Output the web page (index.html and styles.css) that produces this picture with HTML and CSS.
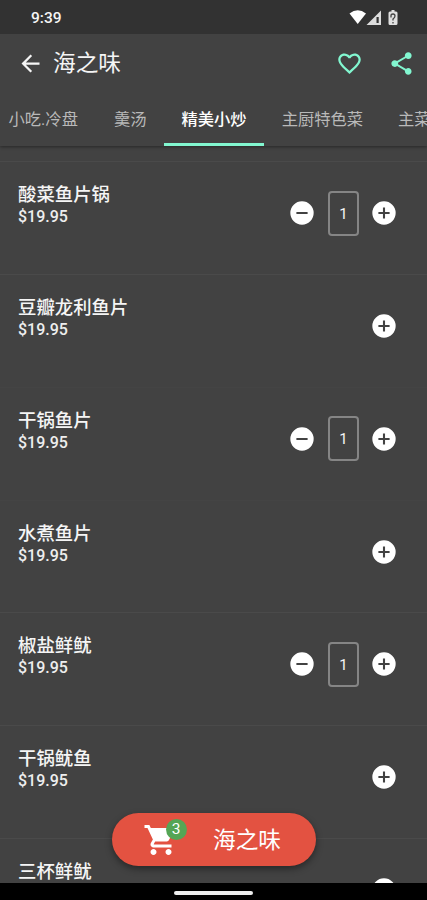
FILE: index.html
```html
<!DOCTYPE html>
<html lang="zh-CN">
<head>
<meta charset="utf-8">
<meta name="viewport" content="width=device-width, initial-scale=1">
<title>海之味</title>
<link rel="stylesheet" href="styles.css">
</head>
<body>
<svg width="0" height="0" class="defs">
  <symbol id="plus" viewBox="0 0 24 24"><path d="M12 2a10 10 0 1 0 0 20 10 10 0 0 0 0-20zm4.800 10.900h-3.900v3.900h-1.800v-3.900H7.200v-1.800h3.900V7.200h1.800v3.900h3.900v1.800z"/></symbol>
  <symbol id="minus" viewBox="0 0 24 24"><path d="M12 2a10 10 0 1 0 0 20 10 10 0 0 0 0-20zm4.800 10.900H7.200v-1.800h9.600v1.800z"/></symbol>
</svg>
<div class="phone">
  <header class="top">
    <div class="status">
      <span class="time">9:39</span>
      <svg class="signals" width="50" height="18" viewBox="0 0 50 18">
        <path fill="#fff" d="M.5 4.500Q8.700-2 17 4.500L8.700 15z"/>
        <path fill="#ddd" d="M32 1.500V16H17.500z"/>
        <path fill="#333" d="M27.500 8h2.200v6h-2.200z"/>
        <path fill="#e0e0e0" d="M41 2.500h1.500V1h3v1.500H47q1.500 0 1.500 1.500v10.500q0 1.500-1.500 1.500h-6q-1.500 0-1.500-1.500V4q0-1.500 1.500-1.500z"/>
        <path fill="none" stroke="#444" stroke-width="1.300" d="M42 8.500V6.500Q42 5 44 5t2 2q0 1.500-2 3v1.500M44 13v1.500"/>
      </svg>
    </div>
    <div class="bar">
      <svg class="back" viewBox="0 0 24 24"><path d="M20 11H7.830l5.590-5.590L12 4l-8 8 8 8 1.410-1.410L7.830 13H20v-2z"/></svg>
      <h1>海之味</h1>
      <svg class="action heart" viewBox="0 0 24 24"><path d="M16.500 3c-1.740 0-3.410.81-4.500 2.090C10.910 3.810 9.240 3 7.500 3 4.420 3 2 5.420 2 8.500c0 3.780 3.400 6.860 8.550 11.540L12 21.350l1.450-1.320C18.600 15.360 22 12.280 22 8.500 22 5.420 19.580 3 16.500 3zm-4.400 15.550l-.1.100-.1-.1C7.140 14.240 4 11.390 4 8.500 4 6.500 5.500 5 7.500 5c1.540 0 3.040.99 3.570 2.360h1.870C13.460 5.990 14.960 5 16.500 5c2 0 3.500 1.500 3.500 3.500 0 2.890-3.140 5.740-7.900 10.050z"/></svg>
      <svg class="action" viewBox="0 0 24 24"><path d="M18 16.080c-.76 0-1.440.3-1.960.77L8.910 12.700c.05-.23.090-.46.090-.7s-.04-.47-.09-.7l7.050-4.110c.54.5 1.250.81 2.040.81 1.660 0 3-1.340 3-3s-1.340-3-3-3-3 1.340-3 3c0 .24.040.47.090.7L8.040 9.810C7.500 9.310 6.790 9 6 9c-1.660 0-3 1.340-3 3s1.340 3 3 3c.79 0 1.500-.31 2.040-.81l7.120 4.160c-.05.21-.08.43-.08.650 0 1.610 1.310 2.920 2.920 2.920s2.920-1.310 2.920-2.920-1.310-2.920-2.920-2.920z"/></svg>
    </div>
    <nav class="tabs">
      <span class="tab first">小吃.冷盘</span>
      <span class="tab">羹汤</span>
      <span class="tab active">精美小炒</span>
      <span class="tab">主厨特色菜</span>
      <span class="tab">主菜</span>
    </nav>
  </header>
  <main class="list">
    <section class="item"><div class="info"><h2>酸菜鱼片锅</h2><p>$19.95</p></div><div class="stepper"><svg><use href="#minus"/></svg><span class="qty">1</span><svg><use href="#plus"/></svg></div></section>
    <section class="item"><div class="info"><h2>豆瓣龙利鱼片</h2><p>$19.95</p></div><div class="stepper"><svg><use href="#plus"/></svg></div></section>
    <section class="item faint"><div class="info"><h2>干锅鱼片</h2><p>$19.95</p></div><div class="stepper"><svg><use href="#minus"/></svg><span class="qty">1</span><svg><use href="#plus"/></svg></div></section>
    <section class="item faint"><div class="info"><h2>水煮鱼片</h2><p>$19.95</p></div><div class="stepper"><svg><use href="#plus"/></svg></div></section>
    <section class="item"><div class="info"><h2>椒盐鲜鱿</h2><p>$19.95</p></div><div class="stepper"><svg><use href="#minus"/></svg><span class="qty">1</span><svg><use href="#plus"/></svg></div></section>
    <section class="item"><div class="info"><h2>干锅鱿鱼</h2><p>$19.95</p></div><div class="stepper"><svg><use href="#plus"/></svg></div></section>
    <section class="item"><div class="info"><h2>三杯鲜鱿</h2></div><div class="stepper"><svg><use href="#plus"/></svg></div></section>
  </main>
  <div class="cart">
    <div class="cart-icon">
      <svg viewBox="0 0 24 24"><path d="M7 18c-1.100 0-1.990.9-1.990 2S5.900 22 7 22s2-.9 2-2-.9-2-2-2zM1 2v2h2l3.600 7.590-1.350 2.450c-.16.280-.25.610-.25.960 0 1.100.9 2 2 2h12v-2H7.420c-.14 0-.25-.11-.25-.25l.03-.12.9-1.630h7.450c.75 0 1.410-.41 1.750-1.030l3.580-6.490c.08-.14.120-.31.120-.48 0-.55-.45-1-1-1H5.210l-.94-2H1zm16 16c-1.100 0-1.990.9-1.990 2s.89 2 1.990 2 2-.9 2-2-.9-2-2-2z"/></svg>
      <span class="badge">3</span>
    </div>
    <span class="cart-name">海之味</span>
  </div>
  <footer class="navbar"><span class="handle"></span></footer>
</div>
</body>
</html>
```
FILE: styles.css
```css
* { box-sizing: border-box; }
body {
  margin: 0;
  background: #424242;
  color: #f5f5f5;
  font-family: Roboto, "Noto Sans CJK SC", sans-serif;
}
h1, h2, p { margin: 0; font-weight: 400; }
svg { fill: currentColor; flex: none; }
.defs { position: absolute; }
.phone {
  position: relative;
  display: flex;
  flex-direction: column;
  height: 900px;
  overflow: hidden;
}
.top {
  flex: none;
  height: 146px;
  background: #424242;
  box-shadow: 0 1px 3px rgba(0, 0, 0, .4);
  z-index: 1;
}
.status {
  display: flex;
  align-items: center;
  justify-content: space-between;
  height: 34px;
  padding: 1px 28px 0 31px;
  background: #323232;
}
.time { font-size: 15.5px; font-weight: 500; }
.bar {
  display: flex;
  align-items: center;
  height: 58px;
  padding: 0 12px 0 17px;
}
.back { width: 27px; height: 27px; }
h1 {
  flex: 1;
  margin-left: 9px;
  padding-top: 1px;
  font-size: 22.7px;
  line-height: 32px;
}
.action { width: 27px; height: 27px; color: #82f7d0; }
.heart { margin-right: 25px; }
.tabs {
  display: flex;
  height: 54px;
  overflow: hidden;
}
.tab {
  flex: none;
  padding: 0 17.5px;
  border-bottom: 3px solid transparent;
  color: #b9b9b9;
  font-size: 16.3px;
  line-height: 56px;
  white-space: nowrap;
}
.first { padding-left: 8.5px; padding-right: 18.5px; }
.active {
  border-color: #82f7d0;
  color: #fff;
  font-weight: 500;
}
.list {
  flex: 1;
  min-height: 0;
  padding-top: 15px;
  overflow: hidden;
}
.item {
  display: flex;
  justify-content: space-between;
  height: 112.85px;
  padding: 20px 29px 0 18px;
  border-top: 1px solid #4a4a4a;
}
.faint { border-color: #444; }
h2 {
  font-size: 18.4px;
  font-weight: 500;
  line-height: 25px;
}
.item p {
  font-size: 16px;
  font-weight: 500;
  line-height: 19px;
  color: #eee;
}
.stepper {
  display: flex;
  align-items: center;
  height: 46px;
  margin-top: 8px;
}
.stepper svg { width: 28px; height: 28px; color: #fff; }
.qty {
  width: 31px;
  height: 45px;
  margin: 0 11px 0 12px;
  border: 2px solid #858585;
  border-radius: 4px;
  font-size: 15px;
  line-height: 42px;
  text-align: center;
}
.cart {
  position: absolute;
  left: 112px;
  bottom: 34px;
  display: flex;
  align-items: center;
  width: 204px;
  height: 53px;
  padding-left: 30.5px;
  border-radius: 27px;
  background: #e35241;
  color: #fff;
  box-shadow: 0 3px 7px rgba(0, 0, 0, .4);
}
.cart-icon { position: relative; height: 36px; }
.cart-icon svg { display: block; width: 36px; height: 36px; }
.badge {
  position: absolute;
  left: 23px;
  top: -3px;
  width: 21px;
  height: 21px;
  border-radius: 50%;
  background: #55a555;
  font-size: 15.5px;
  line-height: 21px;
  text-align: center;
}
.cart-name {
  margin-left: 34.5px;
  padding-top: 3px;
  font-size: 22.7px;
  line-height: 32px;
}
.navbar {
  flex: none;
  display: flex;
  justify-content: center;
  height: 17px;
  padding-top: 8px;
  background: #000;
}
.handle { width: 79px; height: 4px; border-radius: 2px; background: #eee; }
```
